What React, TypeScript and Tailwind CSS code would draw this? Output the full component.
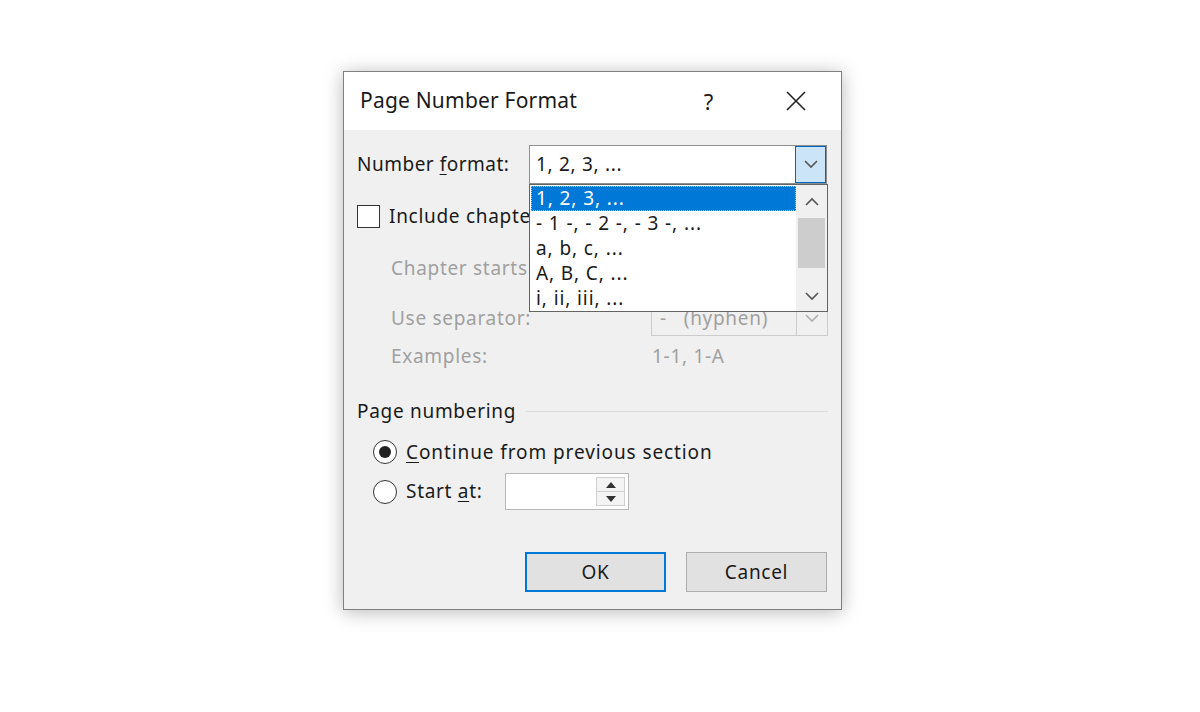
import React from "react";

const FONT = { fontFamily: '"Noto Sans", "Open Sans", sans-serif' };

function Chevron({ up = false, className = "" }: { up?: boolean; className?: string }) {
  return (
    <svg width="14" height="9" viewBox="0 0 14 9" className={className}>
      <path
        d={up ? "M1 8 L7 2 L13 8" : "M1 1 L7 7 L13 1"}
        fill="none"
        stroke="currentColor"
        strokeWidth="1.6"
      />
    </svg>
  );
}

function Radio({ checked }: { checked?: boolean }) {
  return (
    <div className="w-[24px] h-[24px] rounded-full border-[1.5px] border-[#333] bg-white flex items-center justify-center">
      {checked && <div className="w-[12px] h-[12px] rounded-full bg-[#222]" />}
    </div>
  );
}

const FORMATS = ["1, 2, 3, ...", "- 1 -, - 2 -, - 3 -, ...", "a, b, c, ...", "A, B, C, ...", "i, ii, iii, ..."];

export default function App() {
  return (
    <div className="w-[1200px] h-[712px] bg-white pl-[343px] pt-[71px]" style={FONT}>
      <div className="relative w-[499px] h-[539px] border border-[#7f7f7f] shadow-[0_2px_18px_rgba(0,0,0,0.28)] flex flex-col bg-[#f0f0f0] text-[19px] tracking-[0.7px] text-[#1a1a1a]">
        {/* Title bar */}
        <div className="h-[58px] bg-white flex items-center pl-[16px] shrink-0">
          <span className="text-[21px] tracking-[0.2px] text-[#1a1a1a]">Page Number Format</span>
          <span className="ml-auto mr-[72px] text-[22px]">?</span>
          <svg width="20" height="20" viewBox="0 0 20 20" className="mr-[35px]">
            <path d="M1 1 L19 19 M19 1 L1 19" stroke="#222" strokeWidth="1.6" />
          </svg>
        </div>

        {/* Body */}
        <div className="flex flex-col pl-[13px] pr-[13px]">
          {/* Number format */}
          <div className="mt-[15px] h-[39px] flex items-center">
            <span className="w-[172px] tracking-[0.5px]">
              Number <span className="underline underline-offset-[3px]">f</span>ormat:
            </span>
            <div className="w-[298px] h-[39px] bg-white border border-[#8e8e8e] flex items-stretch">
              <span className="flex-1 pl-[6px] flex items-center">1, 2, 3, ...</span>
              <div className="w-[31px] bg-[#cce4f7] border border-[#0067c0] flex items-center justify-center text-[#555]">
                <Chevron />
              </div>
            </div>
          </div>

          {/* Include chapter */}
          <div className="mt-[20px] h-[24px] flex items-center">
            <div className="w-[23px] h-[23px] border-[1.5px] border-[#333] bg-white shrink-0" />
            <span className="ml-[9px] w-[140px] overflow-hidden whitespace-nowrap">Include chapter number</span>
          </div>

          {/* Chapter starts */}
          <div className="mt-[28px] h-[24px] flex items-center pl-[34px] text-[#a0a0a0]">
            <span className="w-[138px] overflow-hidden whitespace-nowrap">Chapter starts with style:</span>
          </div>

          {/* Use separator */}
          <div className="mt-[20px] h-[36px] flex items-center pl-[34px] text-[#a0a0a0]">
            <span className="w-[260px]">Use separator:</span>
            <div className="w-[177px] h-[36px] border border-[#cccccc] bg-[#f0f0f0] flex">
              <span className="flex-1 pl-[8px] flex items-center">-&nbsp;&nbsp;&nbsp;(hyphen)</span>
              <div className="w-[31px] border-l border-[#cccccc] flex items-center justify-center text-[#b0b0b0]">
                <Chevron />
              </div>
            </div>
          </div>

          {/* Examples */}
          <div className="mt-[8px] h-[24px] flex items-center pl-[34px] text-[#a0a0a0]">
            <span className="w-[261px]">Examples:</span>
            <span>1-1, 1-A</span>
          </div>

          {/* Page numbering */}
          <div className="mt-[31px] h-[24px] flex items-center">
            <span>Page numbering</span>
            <div className="flex-1 ml-[10px] h-px bg-[#dcdcdc]" />
          </div>

          <div className="mt-[16px] h-[26px] flex items-center pl-[16px]">
            <Radio checked />
            <span className="ml-[9px] tracking-[0.9px]">
              <span className="underline underline-offset-[3px]">C</span>ontinue from previous section
            </span>
          </div>

          <div className="mt-[8px] h-[37px] flex items-center pl-[16px]">
            <Radio />
            <span className="ml-[9px] w-[99px]">
              Start <span className="underline underline-offset-[3px]">a</span>t:
            </span>
            <div className="w-[124px] h-[37px] bg-white border border-[#b8b8b8] flex justify-end p-[3px]">
              <div className="w-[29px] flex flex-col border border-[#d0d0d0] bg-[#f4f4f4]">
                <div className="flex-1 flex items-center justify-center border-b border-[#d0d0d0]">
                  <svg width="10" height="6" viewBox="0 0 10 6"><path d="M5 0 L10 6 L0 6 Z" fill="#333" /></svg>
                </div>
                <div className="flex-1 flex items-center justify-center">
                  <svg width="10" height="6" viewBox="0 0 10 6"><path d="M0 0 L10 0 L5 6 Z" fill="#333" /></svg>
                </div>
              </div>
            </div>
          </div>

          {/* Buttons */}
          <div className="mt-[42px] h-[40px] flex justify-end gap-[20px] pr-[1px]">
            <button className="w-[141px] h-[40px] bg-[#e1e1e1] border-2 border-[#0078d7] text-[19px]">OK</button>
            <button className="w-[141px] h-[40px] bg-[#e1e1e1] border border-[#adadad] text-[19px]">Cancel</button>
          </div>
        </div>

        {/* Open dropdown list */}
        <div className="absolute left-[185px] top-[112px] w-[299px] h-[128px] bg-white border border-[#646464] flex">
          <div className="flex-1 pt-[1px] pl-[1px] tracking-[0.9px]">
            {FORMATS.map((f, i) => (
              <div
                key={f}
                className={`h-[25px] flex items-center pl-[5px] leading-none ${
                  i === 0 ? "bg-[#0078d7] text-white outline outline-1 outline-dotted outline-[#9cc7ee] -outline-offset-1" : ""
                }`}
              >
                {f}
              </div>
            ))}
          </div>
          <div className="w-[31px] bg-[#f0f0f0] flex flex-col items-center">
            <div className="h-[33px] flex items-center justify-center text-[#555]">
              <Chevron up />
            </div>
            <div className="w-[27px] h-[50px] bg-[#cdcdcd]" />
            <div className="flex-1 flex items-end justify-center pb-[10px] text-[#555]">
              <Chevron />
            </div>
          </div>
        </div>
      </div>
    </div>
  );
}
